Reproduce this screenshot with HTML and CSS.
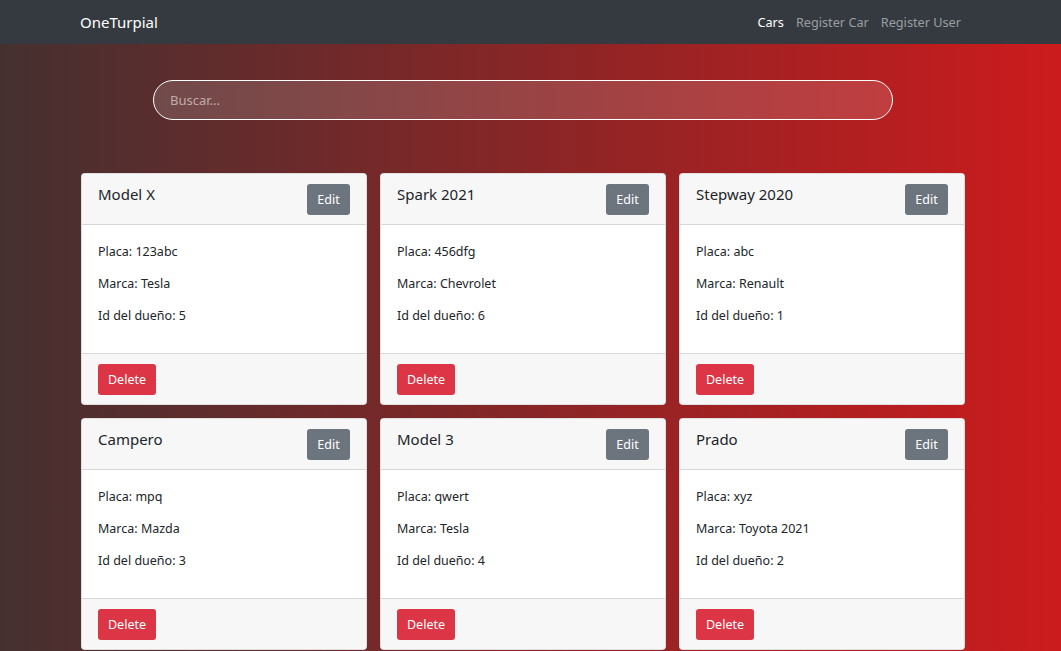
FILE: index.html
```html
<!DOCTYPE html>
<html lang="es">
<head>
<meta charset="utf-8">
<title>OneTurpial</title>
<link rel="stylesheet" href="styles.css">
</head>
<body>
<nav class="navbar">
  <div class="nav-inner">
    <a class="brand">OneTurpial</a>
    <div class="links">
      <a class="link active">Cars</a>
      <a class="link">Register Car</a>
      <a class="link">Register User</a>
    </div>
  </div>
</nav>
<main class="page">
  <div class="container">
    <div class="search-wrap">
      <input class="search" type="text" placeholder="Buscar...">
    </div>
    <div class="grid">
      <div class="card">
        <div class="card-header"><span class="title">Model X</span><button class="btn btn-edit">Edit</button></div>
        <div class="card-body"><p>Placa: 123abc</p><p>Marca: Tesla</p><p>Id del dueño: 5</p></div>
        <div class="card-footer"><button class="btn btn-delete">Delete</button></div>
      </div>
      <div class="card">
        <div class="card-header"><span class="title">Spark 2021</span><button class="btn btn-edit">Edit</button></div>
        <div class="card-body"><p>Placa: 456dfg</p><p>Marca: Chevrolet</p><p>Id del dueño: 6</p></div>
        <div class="card-footer"><button class="btn btn-delete">Delete</button></div>
      </div>
      <div class="card">
        <div class="card-header"><span class="title">Stepway 2020</span><button class="btn btn-edit">Edit</button></div>
        <div class="card-body"><p>Placa: abc</p><p>Marca: Renault</p><p>Id del dueño: 1</p></div>
        <div class="card-footer"><button class="btn btn-delete">Delete</button></div>
      </div>
      <div class="card">
        <div class="card-header"><span class="title">Campero</span><button class="btn btn-edit">Edit</button></div>
        <div class="card-body"><p>Placa: mpq</p><p>Marca: Mazda</p><p>Id del dueño: 3</p></div>
        <div class="card-footer"><button class="btn btn-delete">Delete</button></div>
      </div>
      <div class="card">
        <div class="card-header"><span class="title">Model 3</span><button class="btn btn-edit">Edit</button></div>
        <div class="card-body"><p>Placa: qwert</p><p>Marca: Tesla</p><p>Id del dueño: 4</p></div>
        <div class="card-footer"><button class="btn btn-delete">Delete</button></div>
      </div>
      <div class="card">
        <div class="card-header"><span class="title">Prado</span><button class="btn btn-edit">Edit</button></div>
        <div class="card-body"><p>Placa: xyz</p><p>Marca: Toyota 2021</p><p>Id del dueño: 2</p></div>
        <div class="card-footer"><button class="btn btn-delete">Delete</button></div>
      </div>
    </div>
  </div>
</main>
</body>
</html>
```
FILE: styles.css
```css
* { box-sizing: border-box; }
html, body { margin: 0; padding: 0; }
body {
  font-family: "Noto Sans", "Open Sans", sans-serif;
  color: #212529;
  height: 651px;
  overflow: hidden;
  background: linear-gradient(to right, #453030, #cc1b1d);
}
.navbar {
  background: #343a40;
  height: 44px;
}
.nav-inner {
  display: flex;
  align-items: center;
  justify-content: space-between;
  height: 44px;
  padding: 0 100px 0 80px;
}
.brand {
  color: #fff;
  font-size: 15px;
  line-height: 1;
}
.links { display: flex; gap: 12px; }
.link {
  color: rgba(255,255,255,0.5);
  font-size: 12.7px;
}
.link.active { color: #fff; }
.container {
  width: 884px;
  margin-left: 81px;
  padding-top: 36px;
}
.search-wrap {
  padding: 0 72px;
}
.search {
  display: block;
  width: 100%;
  height: 40px;
  border: 1px solid #fff;
  border-radius: 20px;
  background: rgba(255,255,255,0.14);
  padding: 0 16px;
  font-family: inherit;
  font-size: 13px;
  color: #fff;
  outline: none;
}
.search::placeholder { color: rgba(255,255,255,0.55); }
.grid {
  margin-top: 53px;
  display: grid;
  grid-template-columns: repeat(3, 286px);
  gap: 13px 13px;
}
.card {
  background: #fff;
  border: 1px solid rgba(0,0,0,0.125);
  border-radius: 4px;
  overflow: hidden;
  display: flex;
  flex-direction: column;
  height: 232px;
}
.card-header {
  background: #f7f7f7;
  border-bottom: 1px solid rgba(0,0,0,0.125);
  height: 51px;
  padding: 10px 16px 0 16px;
  display: flex;
  justify-content: space-between;
  align-items: flex-start;
}
.title {
  font-size: 15px;
  line-height: 20px;
  color: #212529;
}
.btn {
  border: none;
  border-radius: 3px;
  color: #fff;
  font-family: inherit;
  font-size: 12.5px;
  height: 31px;
  padding: 0 10px;
  line-height: 31px;
}
.btn-edit { background: #6c757d; width: 43px; padding: 0; }
.btn-delete { background: #dc3545; width: 58px; padding: 0; }
.card-body {
  flex: 1;
  padding: 17px 16px 0 16px;
}
.card-body p {
  margin: 0 0 13px 0;
  font-size: 12.5px;
  line-height: 19px;
}
.card-footer {
  background: #f7f7f7;
  border-top: 1px solid rgba(0,0,0,0.125);
  height: 51px;
  padding: 10px 16px 0 16px;
}
```
